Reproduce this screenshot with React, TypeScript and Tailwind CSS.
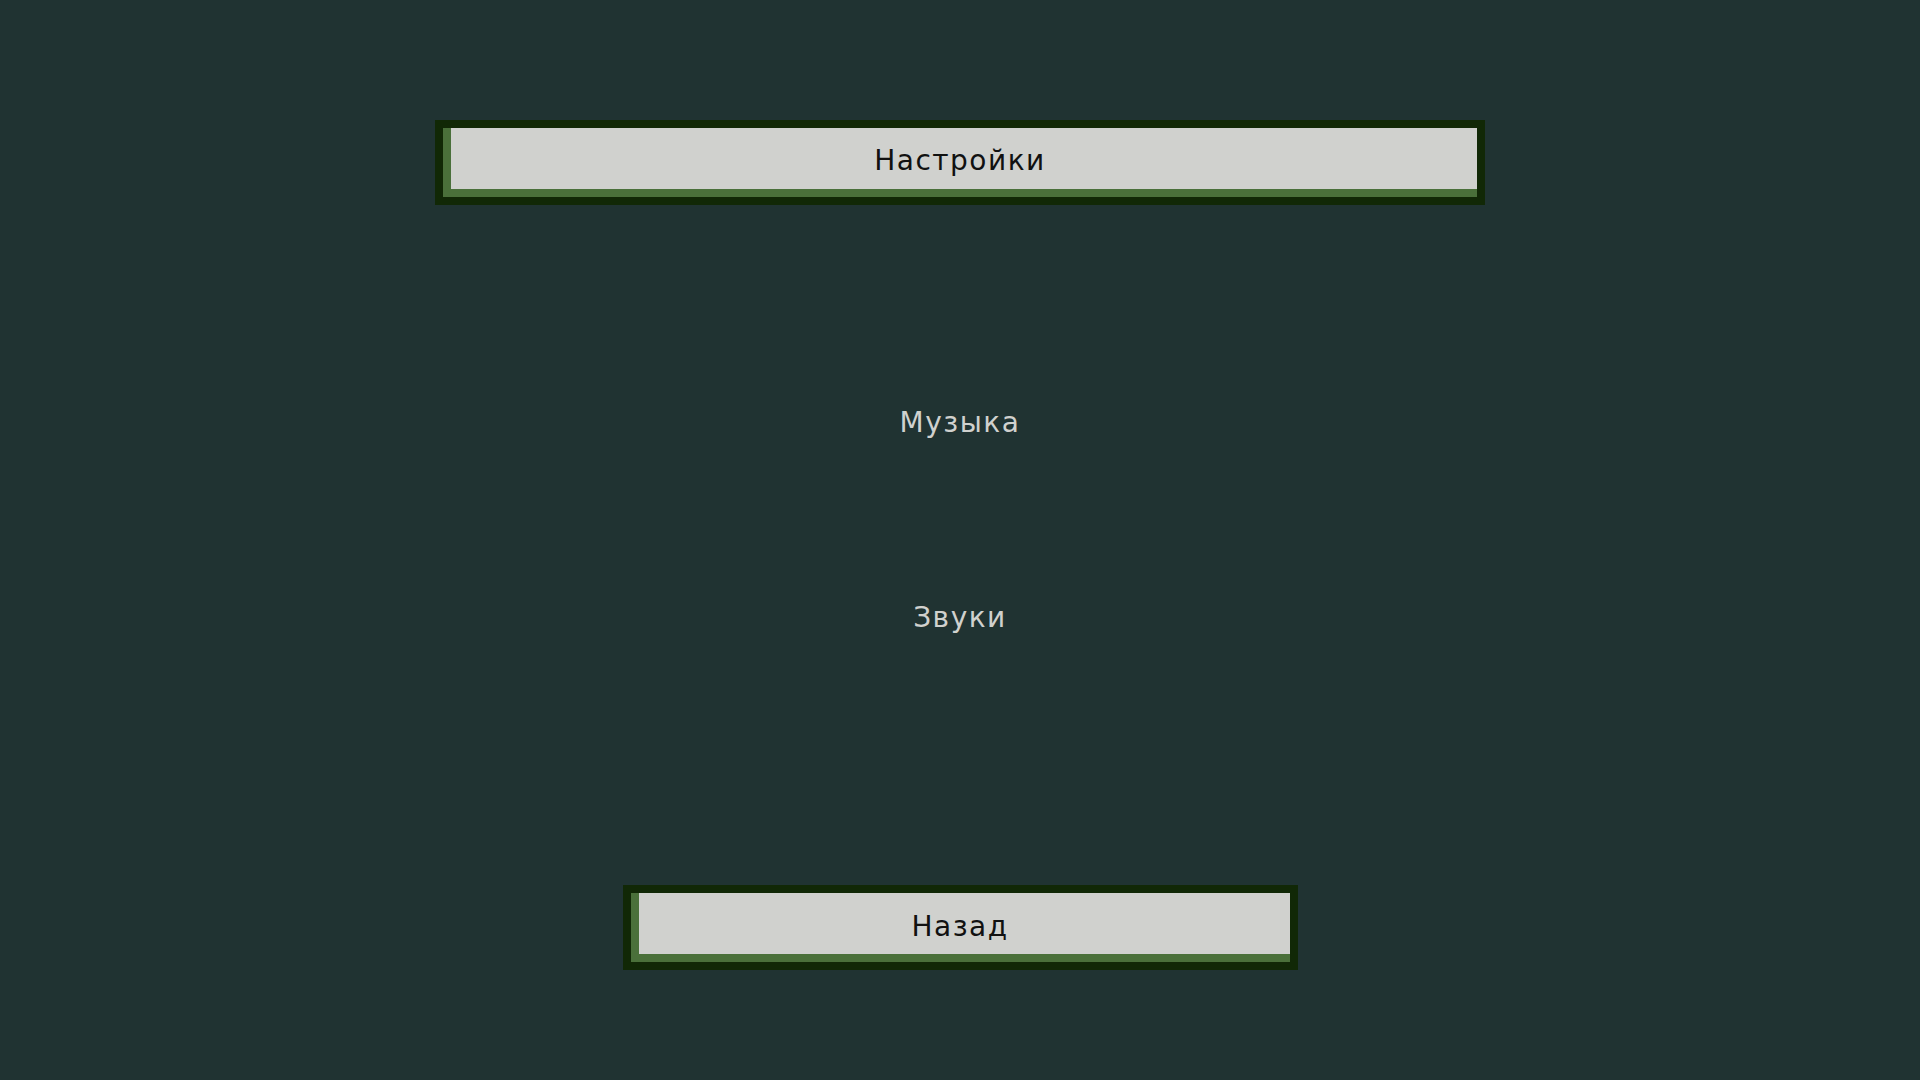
export default function App() {
  const font = { fontFamily: '"DejaVu Sans", "Liberation Sans", sans-serif' };
  return (
    <div className="w-[1920px] h-[1080px] bg-[#203332] flex flex-col items-center pt-[120px]" style={font}>
      <div className="w-[1050px] h-[85px] border-[8px] border-[#112806] flex">
        <div className="flex-1 border-l-[8px] border-b-[8px] border-[#4a703a] bg-[#d0d1ce] flex items-center justify-center pr-[8px] pt-[5px] text-[28px] text-[#111111] tracking-[1.5px]">
          Настройки
        </div>
      </div>
      <div className="mt-[198px] h-[40px] leading-[40px] text-[28px] text-[#d0d1ce] tracking-[1.5px]">Музыка</div>
      <div className="mt-[155px] h-[40px] leading-[40px] text-[28px] text-[#d0d1ce] tracking-[1.5px]">Звуки</div>
      <div className="mt-[247px] w-[675px] h-[85px] border-[8px] border-[#112806] flex">
        <div className="flex-1 border-l-[8px] border-b-[8px] border-[#4a703a] bg-[#d0d1ce] flex items-center justify-center pr-[8px] pt-[6px] text-[28px] text-[#111111] tracking-[1.5px]">
          Назад
        </div>
      </div>
    </div>
  );
}
